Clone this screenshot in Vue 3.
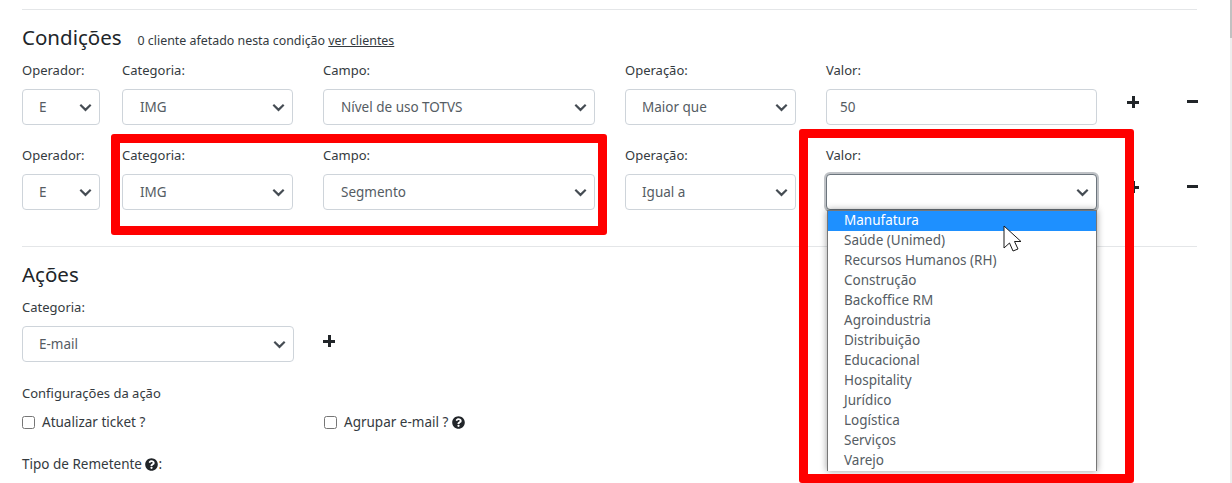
<script setup>
const rows = [
  { cat: 'IMG', campo: 'Nível de uso TOTVS', op: 'Maior que', val: '50' },
  { cat: 'IMG', campo: 'Segmento', op: 'Igual a', val: '' }
]
const options = ['Manufatura', 'Saúde (Unimed)', 'Recursos Humanos (RH)', 'Construção', 'Backoffice RM', 'Agroindustria', 'Distribuição', 'Educacional', 'Hospitality', 'Jurídico', 'Logística', 'Serviços', 'Varejo']
</script>

<template>
  <div class="page">
    <div class="scrollbar"><div class="thumb"></div></div>
    <div class="content">
      <hr class="rule first" />
      <div class="heading">
        <h2>Condições</h2>
        <span class="note">0 cliente afetado nesta condição <u>ver clientes</u></span>
      </div>

      <div v-for="(r, i) in rows" :key="i" class="row">
        <div class="f op"><label>Operador:</label><div class="sel"><span>E</span><svg class="chev" viewBox="0 0 12 8"><path d="M1.2 1.5 6 6.2l4.8-4.7" /></svg></div></div>
        <div class="f cat"><label>Categoria:</label><div class="sel"><span>{{ r.cat }}</span><svg class="chev" viewBox="0 0 12 8"><path d="M1.2 1.5 6 6.2l4.8-4.7" /></svg></div></div>
        <div class="f campo"><label>Campo:</label><div class="sel"><span>{{ r.campo }}</span><svg class="chev" viewBox="0 0 12 8"><path d="M1.2 1.5 6 6.2l4.8-4.7" /></svg></div></div>
        <div class="f oper"><label>Operação:</label><div class="sel"><span>{{ r.op }}</span><svg class="chev" viewBox="0 0 12 8"><path d="M1.2 1.5 6 6.2l4.8-4.7" /></svg></div></div>
        <div class="f val">
          <label>Valor:</label>
          <div v-if="r.val" class="sel"><span>{{ r.val }}</span></div>
          <div v-else class="sel focus">
            <span></span><svg class="chev" viewBox="0 0 12 8"><path d="M1.2 1.5 6 6.2l4.8-4.7" /></svg>
            <ul class="menu">
              <li v-for="(o, k) in options" :key="o" :class="{ active: k === 0 }">{{ o }}</li>
            </ul>
          </div>
        </div>
        <div class="btns">
          <span class="plus"></span>
          <span class="minus"></span>
        </div>
      </div>

      <hr class="rule second" />

      <h2 class="acoes">Ações</h2>
      <label class="catlabel">Categoria:</label>
      <div class="emailrow">
        <div class="sel email"><span>E-mail</span><svg class="chev" viewBox="0 0 12 8"><path d="M1.2 1.5 6 6.2l4.8-4.7" /></svg></div>
        <span class="plus"></span>
      </div>
      <div class="cfg">Configurações da ação</div>
      <div class="checks">
        <div class="check c1"><i class="box"></i>Atualizar ticket ?</div>
        <div class="check"><i class="box"></i>Agrupar e-mail ?
          <svg class="q" viewBox="0 0 512 512"><path d="M504 256c0 137-111 248-248 248S8 393 8 256 119 8 256 8s248 111 248 248zM263 90c-55 0-90 23-117 64-4 5-3 12 3 16l35 26c5 4 13 3 17-2 18-23 30-36 58-36 21 0 46 13 46 33 0 15-12 23-33 34-24 14-56 31-56 73v6c0 7 5 12 12 12h56c7 0 12-5 12-12v-2c0-29 85-30 85-109 0-60-62-103-118-103zm-7 253c-25 0-45 20-45 45s20 45 45 45 45-20 45-45-20-45-45-45z" /></svg>
        </div>
      </div>
      <div class="tipo">Tipo de Remetente <svg class="q" viewBox="0 0 512 512"><path d="M504 256c0 137-111 248-248 248S8 393 8 256 119 8 256 8s248 111 248 248zM263 90c-55 0-90 23-117 64-4 5-3 12 3 16l35 26c5 4 13 3 17-2 18-23 30-36 58-36 21 0 46 13 46 33 0 15-12 23-33 34-24 14-56 31-56 73v6c0 7 5 12 12 12h56c7 0 12-5 12-12v-2c0-29 85-30 85-109 0-60-62-103-118-103zm-7 253c-25 0-45 20-45 45s20 45 45 45 45-20 45-45-20-45-45-45z" /></svg>:</div>
    </div>

    <div class="mark mark-left"></div>
    <div class="mark mark-right"></div>
    <svg class="cursor" viewBox="0 0 19 27"><path d="M1 1V23L6.500 18 10 26 15 24 11.500 16.500H18Z" /></svg>
  </div>
</template>

<style>
html, body { margin: 0; background: #fff; overflow: hidden; }
</style>

<style scoped>
.page {
  position: relative;
  width: 1232px;
  height: 483px;
  overflow: hidden;
  background: #fff;
  font-family: "Noto Sans", sans-serif;
  font-size: 13.5px;
  color: #343a40;
}
.scrollbar { position: absolute; right: 0; top: 0; bottom: 0; width: 2px; background: #eeeeee; }
.thumb { width: 2px; height: 38px; background: #c1c1c1; }
.content { width: 1175px; margin-left: 22px; }
.rule { border: 0; border-top: 1px solid #e4e6e8; margin: 0; }
.rule.first { margin-top: 9px; }
.rule.second { margin-top: 18px; }
.heading { display: flex; align-items: baseline; margin-top: 14px; height: 27px; }
h2 { margin: 0; font-weight: 400; font-size: 20.5px; line-height: 27px; color: #212529; }
.note { margin-left: 16px; font-size: 12.4px; }
.row { display: flex; height: 85px; }
.heading + .row { margin-top: 7px; }
label { display: block; line-height: 18px; height: 18px; margin-top: 3px; font-size: 13px; }
.f { display: flex; flex-direction: column; }
.f label { margin-bottom: 10px; }
.op { width: 78px; margin-right: 22px; }
.cat { width: 171px; margin-right: 30px; }
.campo { width: 272px; margin-right: 30px; }
.oper { width: 171px; margin-right: 30px; }
.val { width: 271px; }
.sel {
  position: relative;
  box-sizing: border-box;
  height: 36px;
  border: 1px solid #ced4da;
  border-radius: 4px;
  background: #fff;
  display: flex;
  align-items: center;
  justify-content: space-between;
  padding: 0 7px 0 17px;
  color: #555c63;
}
.op .sel, .oper .sel, .email { padding-left: 16px; }
.val .sel { padding-left: 13px; }
.chev { width: 13px; height: 9px; fill: none; stroke: #454c53; stroke-width: 2; }
.sel.focus { border-color: #6c757d; box-shadow: 0 0 0 2px #bfc2c6; }
.menu {
  position: absolute;
  left: 0;
  top: 35px;
  width: 270px;
  box-sizing: border-box;
  margin: 0;
  padding: 0;
  list-style: none;
  background: #fff;
  border-left: 1px solid #777;
  border-right: 1px solid #777;
  border-top: 1px solid #777;
  box-shadow: 0 0 7px rgba(0, 0, 0, .4);
  z-index: 2;
}
.menu li { height: 20px; line-height: 18px; padding-left: 16px; }
.menu li.active { background: #1e90ff; color: #fff; }
.btns { position: relative; flex: 1; }
.plus, .minus { position: absolute; display: block; }
.btns .plus { left: 30px; top: 38px; }
.btns .minus { left: 90px; top: 38px; }
.plus { width: 12px; height: 12px; background:
  linear-gradient(#212529, #212529) center / 12px 3px no-repeat,
  linear-gradient(#212529, #212529) center / 3px 12px no-repeat; }
.minus { width: 11px; height: 3px; margin-top: 4px; background: #212529; }
.acoes { margin-top: 14px; }
.catlabel { margin-top: 10px; }
.emailrow { position: relative; margin-top: 10px; display: flex; }
.email { width: 272px; }
.emailrow .plus { position: absolute; left: 301px; top: 9px; }
.cfg { margin-top: 22px; line-height: 18px; font-size: 13px; }
.checks { display: flex; margin-top: 11px; }
.check { display: flex; align-items: center; line-height: 18px; }
.c1 { width: 302px; }
.box { box-sizing: border-box; width: 13px; height: 13px; border: 1px solid #767676; border-radius: 2.500px; margin-right: 7px; background: #fff; }
.q { width: 13px; height: 13px; fill: #212529; vertical-align: -2px; }
.check .q { margin-left: 4px; }
.tipo { margin-top: 24px; line-height: 18px; }
.mark { position: absolute; box-sizing: border-box; border: 9px solid #ff0000; border-radius: 3px; z-index: 3; }
.mark-left { left: 111px; top: 134px; width: 496px; height: 101px; }
.mark-right { left: 799px; top: 129px; width: 335px; height: 354px; }
.cursor { position: absolute; left: 1003px; top: 225px; width: 19px; height: 27px; fill: #fff; stroke: #1a1a1a; stroke-width: 1; z-index: 4; }
</style>
